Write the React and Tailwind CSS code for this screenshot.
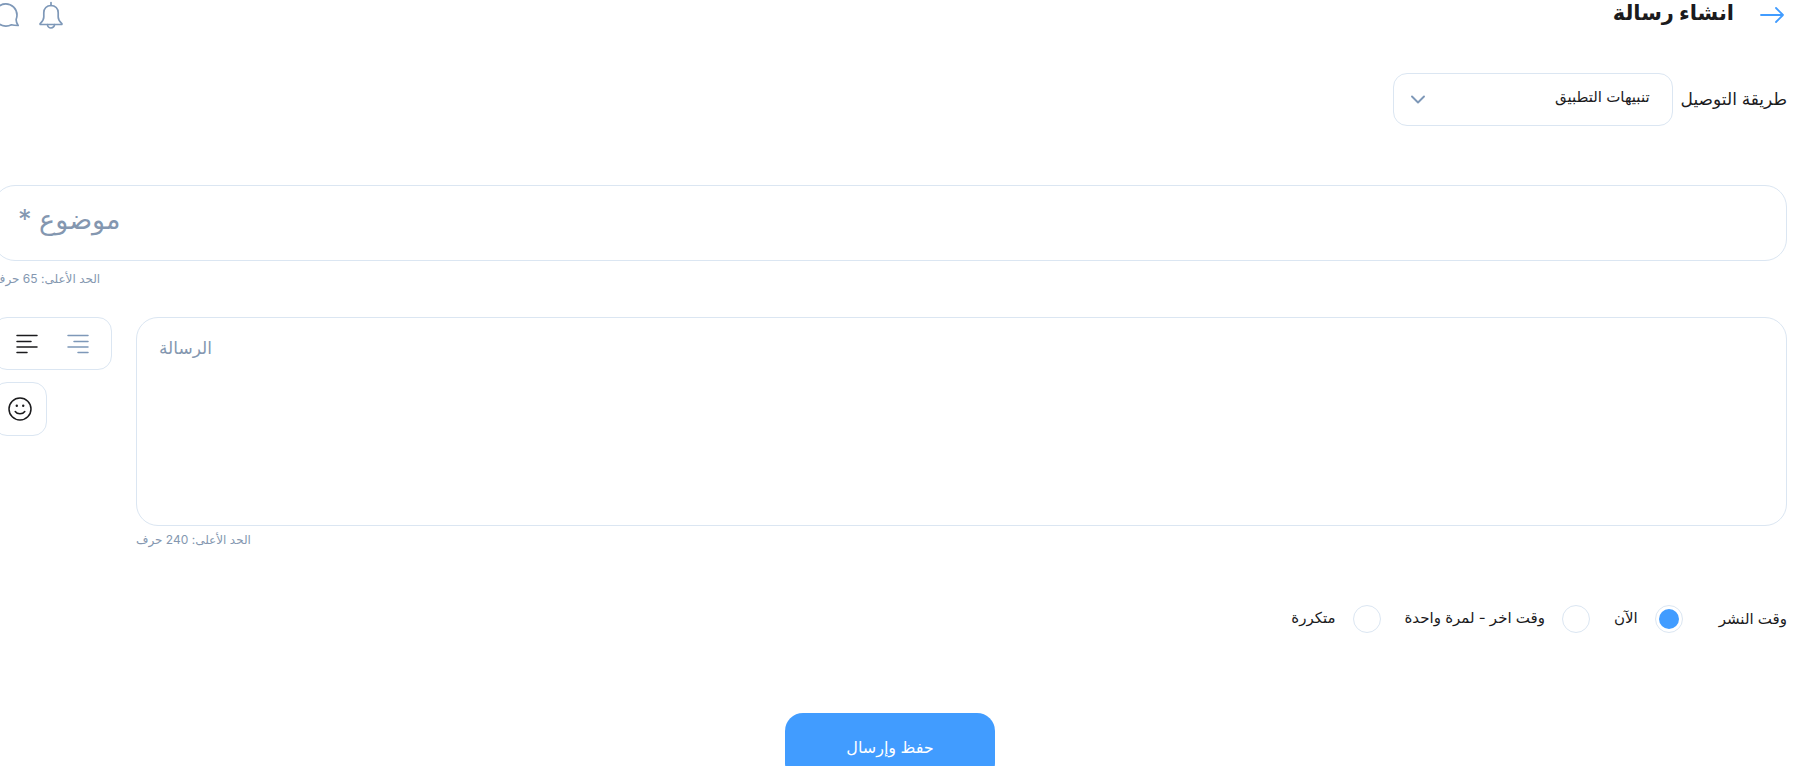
import { useState } from 'react'

const deliveryMethods = ['تنبيهات التطبيق', 'البريد الإلكتروني', 'رسالة نصية']

const publishTimes = [
  { id: 'now', label: 'الآن' },
  { id: 'once', label: 'وقت اخر - لمرة واحدة' },
  { id: 'repeat', label: 'متكررة' },
]

function ArrowIcon() {
  return (
    <svg width="24" height="18" viewBox="0 0 24 18" fill="none" stroke="currentColor" strokeWidth="1.8" strokeLinecap="round" strokeLinejoin="round">
      <path d="M1 9h22M16 2l7 7-7 7" />
    </svg>
  )
}

function BellIcon() {
  return (
    <svg width="24" height="28" viewBox="0 0 24 28" fill="none" stroke="currentColor" strokeWidth="1.7" strokeLinecap="round" strokeLinejoin="round">
      <path d="M12 1.500v3" />
      <path d="M12 4.500c-4.300 0-7.200 3-7.200 7.200v4.300c0 2.500-1 4.200-3.400 6.300-.6.600-.4 1.200.400 1.200h20.400c.8 0 1-.6.4-1.200-2.400-2.100-3.400-3.800-3.400-6.300v-4.300c0-4.200-2.900-7.200-7.200-7.200z" />
      <path d="M8.500 23.500a3.500 3.500 0 0 0 7 0" />
    </svg>
  )
}

function ChatIcon() {
  return (
    <svg width="26" height="26" viewBox="0 0 26 26" fill="none" stroke="currentColor" strokeWidth="1.7" strokeLinecap="round" strokeLinejoin="round">
      <path d="M18.500 22.800c-1.700.9-3.500 1.400-5.500 1.400A11.200 11.200 0 1 1 24 13c0 1.500-.3 3-.8 4.300-.2 2 .5 4.300 2 6.200-2.300-.1-4.700-.2-6.700-.7z" />
    </svg>
  )
}

function AlignIcon({ side }) {
  return (
    <svg width="22" height="20" viewBox="0 0 22 20" fill="none" stroke="currentColor" strokeWidth="1.5" strokeLinecap="round">
      {side === 'left' ? (
        <path d="M1 1.500h20M1 7.500h14M1 13h20M1 18.500h10" />
      ) : (
        <path d="M1 1.500h20M7 7.500h14M1 13h20M11 18.500h10" />
      )}
    </svg>
  )
}

function SmileIcon() {
  return (
    <svg width="24" height="24" viewBox="0 0 24 24" fill="none" stroke="currentColor" strokeWidth="1.5" strokeLinecap="round">
      <circle cx="12" cy="12" r="11" />
      <path d="M7.200 14.500c1 1.400 2.800 2.300 4.800 2.300s3.800-.9 4.800-2.300" />
      <circle cx="8.800" cy="8.800" r="1.200" fill="currentColor" stroke="none" />
      <circle cx="15.200" cy="8.800" r="1.200" fill="currentColor" stroke="none" />
    </svg>
  )
}

function App() {
  const [method, setMethod] = useState(deliveryMethods[0])
  const [subject, setSubject] = useState('')
  const [message, setMessage] = useState('')
  const [align, setAlign] = useState('left')
  const [publishAt, setPublishAt] = useState('now')

  return (
    <div dir="rtl" className="h-screen overflow-hidden bg-white text-[#1b1b1d] font-[Inter,'DejaVu_Sans',sans-serif]">
      <form className="ms-6 -me-[7px]" onSubmit={(e) => e.preventDefault()}>
        <header className="flex items-center justify-between h-[30px]">
          <div className="flex items-center gap-[26px] ps-[3px]">
            <button type="button" aria-label="رجوع" className="text-[#419cff]">
              <ArrowIcon />
            </button>
            <h1 className="pb-1 text-[21px] leading-6 font-bold">انشاء رسالة</h1>
          </div>
          <div className="flex items-center gap-5 text-[#7e98b8]">
            <button type="button" aria-label="الإشعارات">
              <BellIcon />
            </button>
            <button type="button" aria-label="المحادثات">
              <ChatIcon />
            </button>
          </div>
        </header>

        <div className="flex items-center gap-2 mt-[43px]">
          <label htmlFor="method" className="text-[17px]">طريقة التوصيل</label>
          <div className="relative w-[280px]">
            <select
              id="method"
              value={method}
              onChange={(e) => setMethod(e.target.value)}
              className="w-full h-[53px] ps-[22px] pe-12 pb-1 border border-[#dbe6f2] rounded-[14px] bg-white text-[15px] appearance-none"
            >
              {deliveryMethods.map((m) => (
                <option key={m}>{m}</option>
              ))}
            </select>
            <svg className="absolute left-[18px] top-[22px] text-[#7e98b8] pointer-events-none" width="14" height="9" viewBox="0 0 14 9" fill="none" stroke="currentColor" strokeWidth="1.9" strokeLinecap="round" strokeLinejoin="round">
              <path d="M1 1.500l6 6 6-6" />
            </svg>
          </div>
        </div>

        <input
          type="text"
          aria-label="موضوع"
          maxLength={65}
          value={subject}
          onChange={(e) => setSubject(e.target.value)}
          placeholder="موضوع *"
          className="block w-full h-[76px] mt-[59px] px-6 pb-2 border border-[#dbe6f2] rounded-[22px] text-[27px] text-left placeholder:text-[#8497b0]"
        />
        <p className="mt-2 text-xs leading-5 text-left text-[#8497b0]">الحد الأعلى: 65 حرف</p>

        <div className="flex gap-6 mt-7">
          <div className="flex-1">
            <textarea
              aria-label="الرسالة"
              maxLength={240}
              value={message}
              onChange={(e) => setMessage(e.target.value)}
              placeholder="الرسالة"
              className="block w-full h-[209px] px-[22px] py-4 border border-[#dbe6f2] rounded-[22px] text-[17px] leading-7 text-left resize-none placeholder:text-[#8497b0]"
            />
            <p className="mt-1 text-xs leading-5 text-left text-[#8497b0]">الحد الأعلى: 240 حرف</p>
          </div>
          <div className="flex flex-col items-end gap-3 w-[119px]">
            <div className="flex items-center justify-between w-full h-[53px] px-[22px] border border-[#dbe6f2] rounded-[14px]">
              {['right', 'left'].map((side) => (
                <button
                  key={side}
                  type="button"
                  aria-label={side === 'left' ? 'محاذاة لليسار' : 'محاذاة لليمين'}
                  onClick={() => setAlign(side)}
                  className={align === side ? 'text-[#1b1b1d]' : 'text-[#7e98b8]'}
                >
                  <AlignIcon side={side} />
                </button>
              ))}
            </div>
            <button
              type="button"
              aria-label="رمز تعبيري"
              className="flex items-center justify-center w-[54px] h-[54px] border border-[#dbe6f2] rounded-[14px]"
            >
              <SmileIcon />
            </button>
          </div>
        </div>

        <fieldset className="flex items-center gap-9 mt-[55px]">
          <legend className="float-right text-[15px]">وقت النشر</legend>
          <div className="flex items-center gap-6">
            {publishTimes.map((t) => (
              <label key={t.id} className="flex items-center gap-[17px] text-[15px]">
                <input
                  type="radio"
                  name="publishAt"
                  checked={publishAt === t.id}
                  onChange={() => setPublishAt(t.id)}
                  className="size-7 p-[3px] border border-[#dbe6f2] rounded-full appearance-none bg-clip-content checked:bg-[#419cff]"
                />
                <span className="pb-[2px]">{t.label}</span>
              </label>
            ))}
          </div>
        </fieldset>

        <button type="submit" className="block w-[210px] h-[68px] mx-auto mt-20 rounded-[18px] bg-[#419cff] text-white text-base">
          حفظ وإرسال
        </button>
      </form>
    </div>
  )
}

export default App
